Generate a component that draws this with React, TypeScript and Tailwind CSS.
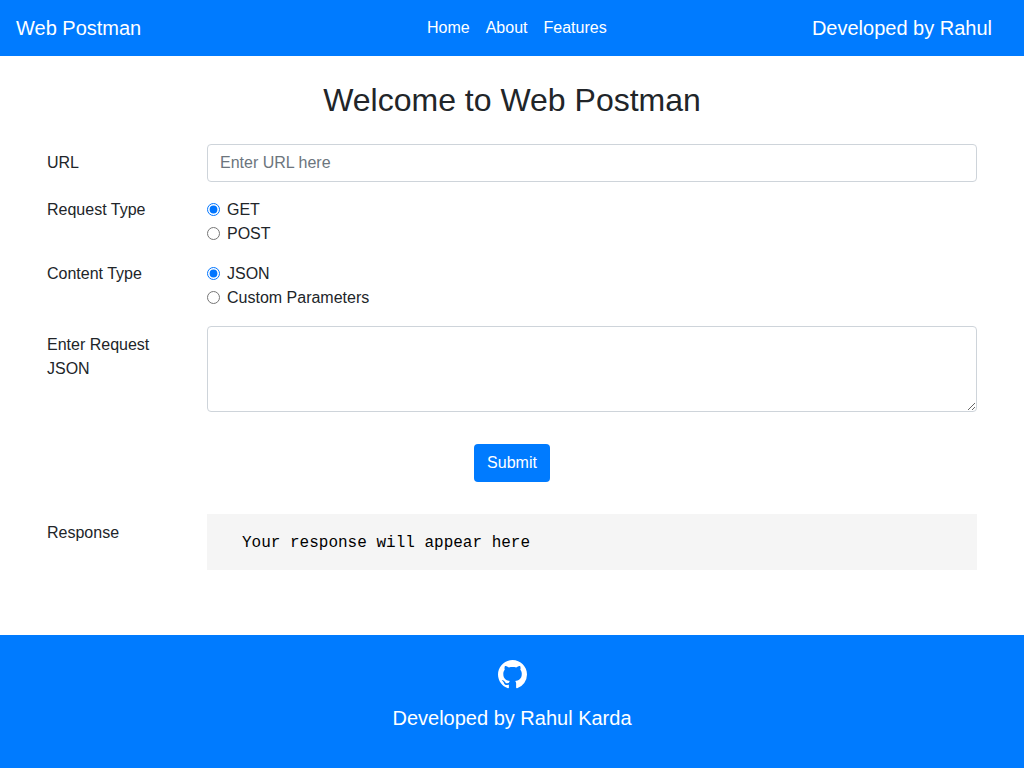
const labelClass = "w-[160px] shrink-0 pr-[15px] text-base leading-6";

function Radio({ label, checked }: { label: string; checked?: boolean }) {
  return (
    <label className="flex items-center h-6">
      <input
        type="radio"
        defaultChecked={checked}
        className="w-[13px] h-[13px] m-0 mr-[7px] -translate-y-px [accent-color:#0075ff]"
        style={{ appearance: "auto" }}
      />
      <span>{label}</span>
    </label>
  );
}

export default function App() {
  return (
    <div className="min-h-[768px] flex flex-col bg-white text-[#212529] font-['Liberation_Sans',Arial,sans-serif] text-base leading-6">
      <nav className="h-14 bg-[#007bff] text-white flex items-center pl-4 pr-8">
        <a className="text-xl leading-[30px] w-[411px]">Web Postman</a>
        <div className="flex gap-4">
          <a>Home</a>
          <a>About</a>
          <a>Features</a>
        </div>
        <span className="ml-auto text-xl leading-[30px]">Developed by Rahul</span>
      </nav>

      <main className="flex-1 w-[960px] mx-auto px-[15px]">
        <h1 className="text-center text-[32px] leading-[38px] font-medium mt-[25px] mb-[25px]">
          Welcome to Web Postman
        </h1>

        <div className="flex mb-4">
          <div className={`${labelClass} pt-[7px]`}>URL</div>
          <input
            placeholder="Enter URL here"
            className="flex-1 h-[38px] px-3 border border-[#ced4da] rounded placeholder:text-[#6c757d] outline-none"
          />
        </div>

        <div className="flex mb-4">
          <div className={labelClass}>Request Type</div>
          <div className="flex flex-col">
            <Radio label="GET" checked={true} />
            <Radio label="POST" />
          </div>
        </div>

        <div className="flex mb-4">
          <div className={labelClass}>Content Type</div>
          <div className="flex flex-col">
            <Radio label="JSON" checked={true} />
            <Radio label="Custom Parameters" />
          </div>
        </div>

        <div className="flex mb-8">
          <div className={`${labelClass} pt-[7px]`}>Enter Request JSON</div>
          <textarea
            rows={3}
            className="flex-1 h-[86px] px-3 py-1.5 border border-[#ced4da] rounded outline-none"
            style={{ resize: "vertical" }}
          />
        </div>

        <div className="flex justify-center mb-8">
          <button className="h-[38px] px-[13px] bg-[#007bff] text-white rounded">Submit</button>
        </div>

        <div className="flex">
          <div className={`${labelClass} pt-[7px]`}>Response</div>
          <pre className="flex-1 h-14 bg-[#f5f5f5] text-black pl-[35px] pt-[17px] font-['Liberation_Mono',monospace] text-base leading-6">
            Your response will appear here
          </pre>
        </div>
      </main>

      <footer className="h-[133px] bg-[#007bff] text-white flex flex-col items-center">
        <svg viewBox="0 0 16 16" fill="currentColor" className="mt-[25px] w-[29px] h-[29px]">
          <path d="M8 0C3.58 0 0 3.58 0 8c0 3.54 2.29 6.53 5.47 7.59.4.07.55-.17.55-.38 0-.19-.01-.82-.01-1.49-2.01.37-2.53-.49-2.69-.94-.09-.23-.48-.94-.82-1.13-.28-.15-.68-.52-.01-.53.63-.01 1.08.58 1.23.82.72 1.21 1.87.87 2.33.66.07-.52.28-.87.51-1.07-1.78-.2-3.64-.89-3.64-3.95 0-.87.31-1.59.82-2.15-.08-.2-.36-1.02.08-2.12 0 0 .67-.21 2.2.82.64-.18 1.32-.27 2-.27.68 0 1.36.09 2 .27 1.53-1.04 2.2-.82 2.2-.82.44 1.1.16 1.92.08 2.12.51.56.82 1.27.82 2.15 0 3.07-1.87 3.75-3.65 3.95.29.25.54.73.54 1.48 0 1.07-.01 1.93-.01 2.2 0 .21.15.46.55.38A8.013 8.013 0 0016 8c0-4.42-3.58-8-8-8z" />
        </svg>
        <p className="mt-[14px] text-xl leading-[30px]">Developed by Rahul Karda</p>
      </footer>
    </div>
  );
}
